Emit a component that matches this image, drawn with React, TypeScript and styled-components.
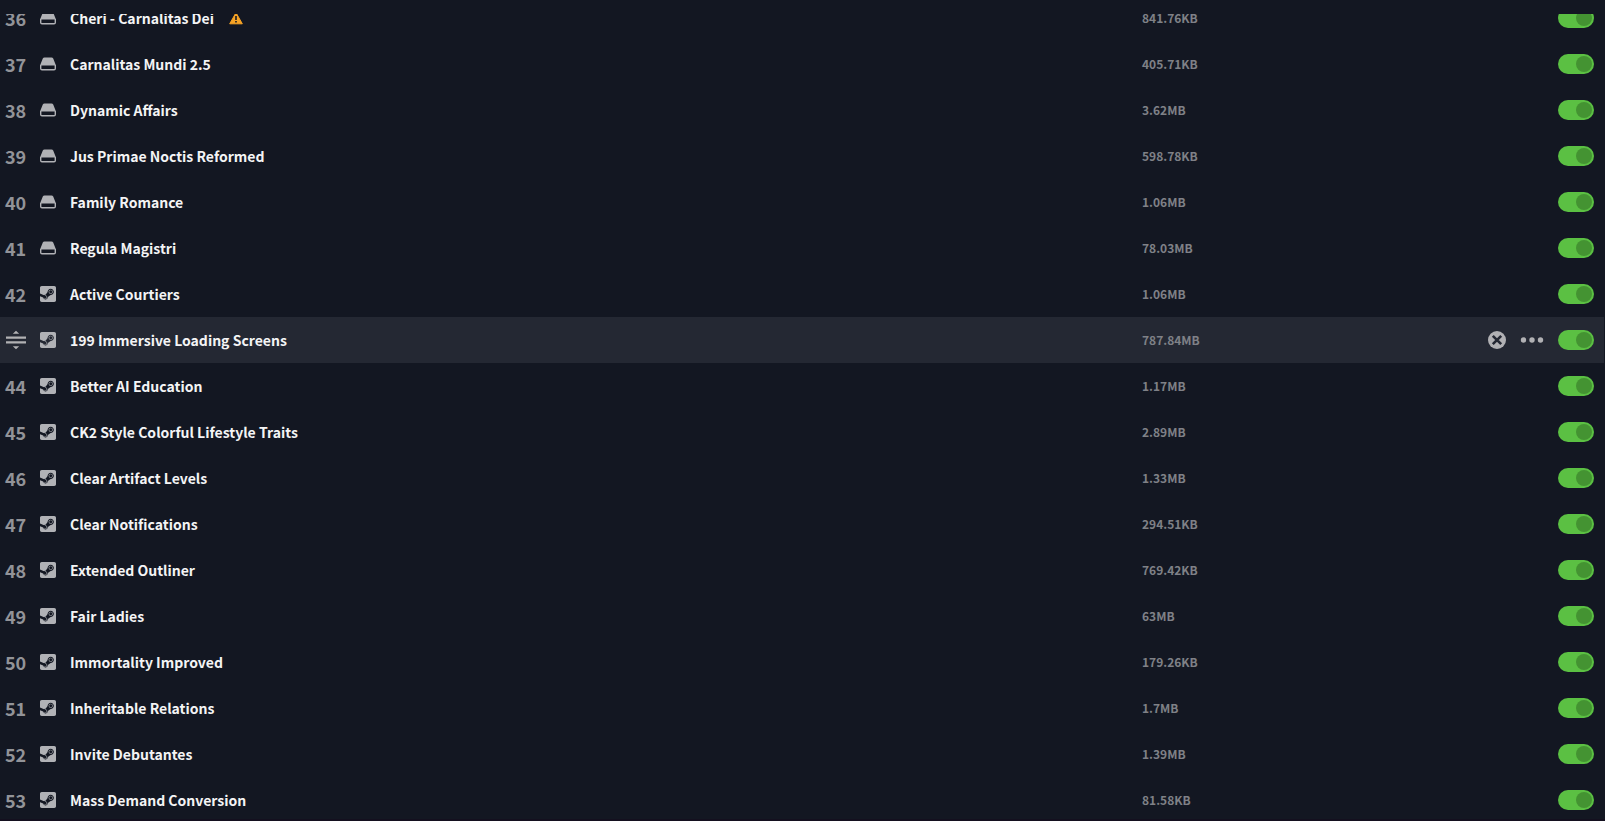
import React, { useState } from 'react';
import styled, { createGlobalStyle } from 'styled-components';

const GlobalStyle = createGlobalStyle`
  *, *::before, *::after { box-sizing: border-box; }
  body {
    margin: 0;
    background: #131722;
    color: #f4f4f5;
    font-family: "Noto Sans CJK SC", "Noto Sans", sans-serif;
  }
`;

const Page = styled.main`
  display: flex;
  flex-direction: column;
  height: 100vh;
  padding-top: 14px;
  border-bottom: 2px solid #14101f;
`;

const Viewport = styled.div`
  flex: 1;
  min-height: 0;
  overflow: hidden;
`;

const List = styled.ul`
  list-style: none;
  margin: -19px 1px 0 0;
  padding: 0;
`;

const Row = styled.li<{ $active: boolean }>`
  display: grid;
  grid-template-columns: 40px 16px minmax(0, 1086fr) minmax(0, 346fr) 70px 36px;
  align-items: center;
  height: 46px;
  padding: 0 10px 0 0;
  background: ${({ $active }) => ($active ? '#242833' : 'transparent')};
`;

const Order = styled.span`
  padding-left: 5px;
  color: #929398;
  font-size: 18px;
  font-weight: 700;
  line-height: 20px;
`;

const Source = styled.span`
  display: flex;
  color: #b1b2b6;
`;

const Title = styled.label`
  display: flex;
  align-items: center;
  gap: 15px;
  padding-left: 14px;
  font-size: 14px;
  font-weight: 700;
  line-height: 20px;
  white-space: nowrap;
`;

const Size = styled.span`
  color: #7f8187;
  font-size: 12px;
  font-weight: 700;
  line-height: 20px;
`;

const Actions = styled.div`
  display: flex;
  align-items: center;
  gap: 14px;
`;

const IconButton = styled.button`
  display: flex;
  padding: 0;
  border: 0;
  background: none;
  color: #b1b1b4;
  cursor: pointer;
`;

const DragHandle = styled(IconButton)`
  margin-left: 6px;
  cursor: grab;
`;

const Switch = styled.input`
  appearance: none;
  display: flex;
  align-items: center;
  width: 36px;
  height: 20px;
  margin: 0;
  padding: 0 2px;
  border-radius: 10px;
  background: #4a4d57;
  cursor: pointer;

  &::before {
    content: '';
    width: 16px;
    height: 16px;
    border-radius: 50%;
    background: #2f323b;
  }
  &:checked {
    justify-content: flex-end;
    background: #5bc043;
  }
  &:checked::before { background: #449332; }
`;

const DriveIcon = () => (
  <svg width="16" height="16" viewBox="0 0 16 16" aria-hidden="true">
    <path d="M4.500 1.500h7c.8 0 1.400.4 1.700 1.100L16 9.600H0l2.800-7c.3-.7.9-1.100 1.700-1.100z" fill="currentColor" />
    <path d="M.7 9v3.400c0 .8.500 1.300 1.300 1.300h12c.8 0 1.300-.5 1.300-1.300V9" fill="none" stroke="currentColor" strokeWidth="1.400" />
  </svg>
);

const SteamIcon = () => (
  <svg width="16" height="16" viewBox="0 0 448 448" aria-hidden="true">
    <path
      fill="currentColor"
      transform="translate(0 -32)"
      d="M185.200 356.500c7.700-18.500-1-39.700-19.600-47.400l-29.500-12.200c11.400-4.300 24.300-4.500 36.400.5 12.200 5.100 21.600 14.600 26.700 26.700 5 12.200 5 25.600-.1 37.700-10.500 25.100-39.400 37-64.600 26.500-11.600-4.800-20.400-13.600-25.400-24.200l28.500 11.800c18.600 7.800 39.900-.9 47.600-19.400zM400 32H48C21.500 32 0 53.500 0 80v160.700l116.600 48.100c12-8.200 26.200-12.100 40.700-11.300l55.400-80.200v-1.100c0-48.200 39.300-87.500 87.600-87.500s87.600 39.300 87.600 87.500c0 49.200-40.900 88.700-89.600 87.500l-79 56.300c1.600 38.500-29.100 68.800-65.700 68.800-31.800 0-58.500-22.700-64.500-52.700L0 319.200V432c0 26.500 21.500 48 48 48h352c26.500 0 48-21.500 48-48V80c0-26.500-21.500-48-48-48zm-99.700 222.500c-32.200 0-58.400-26.100-58.400-58.300s26.200-58.300 58.400-58.300 58.400 26.200 58.400 58.300-26.200 58.300-58.400 58.300zm.1-14.600c24.200 0 43.900-19.600 43.900-43.800 0-24.200-19.600-43.800-43.900-43.800-24.200 0-43.900 19.600-43.900 43.800 0 24.200 19.700 43.800 43.900 43.800z"
    />
  </svg>
);

const WarningIcon = () => (
  <svg width="14" height="14" viewBox="0 0 14 14" role="img" aria-label="Warning">
    <path d="M7 1.700 13.300 12.800H.7z" fill="#f7a325" stroke="#f7a325" strokeWidth="1" strokeLinejoin="round" />
    <path d="M6.200 5h1.600v4H6.200zM6.200 10h1.600v1.600H6.200z" fill="#131722" />
  </svg>
);

const DragIcon = () => (
  <svg width="20" height="20" viewBox="0 0 20 20" fill="currentColor" aria-hidden="true">
    <path d="M10 .800l3.200 3H6.800zM10 19.200l3.200-3H6.800zM0 6.500h20v2.200H0zM0 11.300h20v2.200H0z" />
  </svg>
);

const RemoveIcon = () => (
  <svg width="18" height="18" viewBox="0 0 18 18" aria-hidden="true">
    <circle cx="9" cy="9" r="9" fill="currentColor" />
    <path d="M4.800 4.800l8.400 8.400M13.200 4.800l-8.400 8.400" stroke="#242833" strokeWidth="2.600" />
  </svg>
);

const MoreIcon = () => (
  <svg width="24" height="18" viewBox="0 0 24 18" fill="currentColor" aria-hidden="true">
    <circle cx="3.500" cy="9" r="2.700" />
    <circle cx="12" cy="9" r="2.700" />
    <circle cx="20.500" cy="9" r="2.700" />
  </svg>
);

type Mod = { order: number; name: string; size: string; local?: boolean; warning?: boolean; active?: boolean };

const mods: Mod[] = [
  { order: 36, name: 'Cheri - Carnalitas Dei', size: '841.76KB', local: true, warning: true },
  { order: 37, name: 'Carnalitas Mundi 2.5', size: '405.71KB', local: true },
  { order: 38, name: 'Dynamic Affairs', size: '3.62MB', local: true },
  { order: 39, name: 'Jus Primae Noctis Reformed', size: '598.78KB', local: true },
  { order: 40, name: 'Family Romance', size: '1.06MB', local: true },
  { order: 41, name: 'Regula Magistri', size: '78.03MB', local: true },
  { order: 42, name: 'Active Courtiers', size: '1.06MB' },
  { order: 43, name: '199 Immersive Loading Screens', size: '787.84MB', active: true },
  { order: 44, name: 'Better AI Education', size: '1.17MB' },
  { order: 45, name: 'CK2 Style Colorful Lifestyle Traits', size: '2.89MB' },
  { order: 46, name: 'Clear Artifact Levels', size: '1.33MB' },
  { order: 47, name: 'Clear Notifications', size: '294.51KB' },
  { order: 48, name: 'Extended Outliner', size: '769.42KB' },
  { order: 49, name: 'Fair Ladies', size: '63MB' },
  { order: 50, name: 'Immortality Improved', size: '179.26KB' },
  { order: 51, name: 'Inheritable Relations', size: '1.7MB' },
  { order: 52, name: 'Invite Debutantes', size: '1.39MB' },
  { order: 53, name: 'Mass Demand Conversion', size: '81.58KB' },
];

function ModRow({ mod }: { mod: Mod }) {
  const [enabled, setEnabled] = useState(true);
  const id = `mod-${mod.order}`;
  return (
    <Row $active={!!mod.active}>
      {mod.active ? (
        <DragHandle type="button" aria-label="Reorder"><DragIcon /></DragHandle>
      ) : (
        <Order>{mod.order}</Order>
      )}
      <Source>{mod.local ? <DriveIcon /> : <SteamIcon />}</Source>
      <Title htmlFor={id}>
        {mod.name}
        {mod.warning && <WarningIcon />}
      </Title>
      <Size>{mod.size}</Size>
      <Actions>
        {mod.active && (
          <>
            <IconButton type="button" aria-label="Remove"><RemoveIcon /></IconButton>
            <IconButton type="button" aria-label="More options"><MoreIcon /></IconButton>
          </>
        )}
      </Actions>
      <Switch id={id} type="checkbox" checked={enabled} onChange={(e) => setEnabled(e.target.checked)} />
    </Row>
  );
}

export default function App() {
  return (
    <>
      <GlobalStyle />
      <Page>
        <Viewport>
          <List>
            {mods.map((mod) => <ModRow key={mod.order} mod={mod} />)}
          </List>
        </Viewport>
      </Page>
    </>
  );
}
